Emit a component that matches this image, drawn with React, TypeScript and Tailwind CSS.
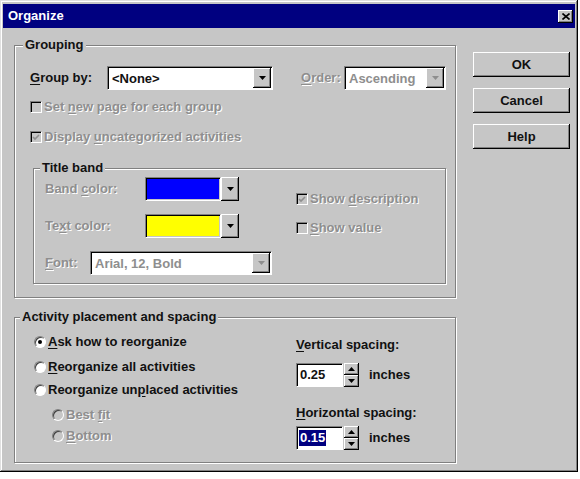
import type { ReactNode } from 'react';

// Win95 style "Organize" dialog

const raised =
  'shadow-[inset_-1px_-1px_0_#000,inset_1px_1px_0_#fff,inset_-2px_-2px_0_#808080]';
const sunken = 'border border-t-[#808080] border-l-[#808080] border-b-white border-r-white';
const etched = 'border border-[#808080] shadow-[1px_1px_0_#fff,inset_1px_1px_0_#fff]';
const disabled = 'text-[#8e8e8e] [text-shadow:1px_1px_0_#fff]';

function U({ children }: { children: ReactNode }) {
  return <span className="underline underline-offset-2">{children}</span>;
}

function Arrow({ up = false, color = '#000' }: { up?: boolean; color?: string }) {
  return (
    <svg width="7" height="4" viewBox="0 0 7 4">
      <polygon points={up ? '3.5,0 7,4 0,4' : '0,0 7,0 3.5,4'} fill={color} />
    </svg>
  );
}

function DropButton({ dim = false }: { dim?: boolean }) {
  return (
    <div className={`w-[18px] h-full flex items-center justify-center bg-[#c6c6c6] ${raised}`}>
      <Arrow color={dim ? '#8e8e8e' : '#000'} />
    </div>
  );
}

function Combo({ value, width, dim = false }: { value: string; width: string; dim?: boolean }) {
  return (
    <div className={`${width} h-[24px] flex bg-white ${sunken} shadow-[inset_1px_1px_0_#000]`}>
      <div className={`flex-1 flex items-center pl-[4px] pt-[1px] ${dim ? 'text-[#8e8e8e]' : ''}`}>
        {value}
      </div>
      <div className="p-[1px] pl-0 h-full">
        <DropButton dim={dim} />
      </div>
    </div>
  );
}

function ColorPick({ color }: { color: string }) {
  return (
    <div className="flex h-[24px] items-stretch">
      <div className={`w-[76px] ${sunken} shadow-[inset_1px_1px_0_#000] p-[1px]`}>
        <div className="w-full h-full" style={{ backgroundColor: color }} />
      </div>
      <DropButton />
    </div>
  );
}

function Check({ checked, label }: { checked: boolean; label: ReactNode }) {
  return (
    <div className="flex items-center h-[16px]">
      <div className={`w-[12px] h-[12px] ${sunken} shadow-[inset_1px_1px_0_#000] flex items-center justify-center`}>
        {checked && (
          <svg width="8" height="7" viewBox="0 0 8 7">
            <path d="M1 3 L3 5 L7 1" stroke="#8e8e8e" strokeWidth="1.6" fill="none" />
          </svg>
        )}
      </div>
      <span className={`ml-[2px] ${disabled}`}>{label}</span>
    </div>
  );
}

function Radio({ on = false, dim = false, label }: { on?: boolean; dim?: boolean; label: ReactNode }) {
  return (
    <div className="flex items-center h-[16px]">
      <div
        className={`w-[12px] h-[12px] rounded-full border border-t-[#808080] border-l-[#808080] border-b-white border-r-white shadow-[inset_1px_1px_0_#404040] flex items-center justify-center ${
          dim ? 'bg-[#c6c6c6]' : 'bg-white'
        }`}
      >
        {on && <div className="w-[4px] h-[4px] rounded-full bg-black" />}
      </div>
      <span className={`ml-[2px] ${dim ? disabled : ''}`}>{label}</span>
    </div>
  );
}

function Spin({ value, selected = false }: { value: string; selected?: boolean }) {
  return (
    <div className="flex items-center h-[24px]">
      <div className={`w-[47px] h-full bg-white ${sunken} shadow-[inset_1px_1px_0_#000] flex items-center pl-[2px]`}>
        <span className={selected ? 'bg-[#000080] text-white px-[1px]' : 'px-[1px]'}>{value}</span>
      </div>
      <div className="ml-[1px] w-[15px] h-full flex flex-col">
        <div className={`flex-1 flex items-center justify-center bg-[#c6c6c6] ${raised}`}>
          <Arrow up />
        </div>
        <div className={`flex-1 flex items-center justify-center bg-[#c6c6c6] ${raised}`}>
          <Arrow />
        </div>
      </div>
      <span className="ml-[10px]">inches</span>
    </div>
  );
}

function Btn({ children }: { children: ReactNode }) {
  return (
    <button className={`w-[97px] h-[25px] bg-[#c6c6c6] ${raised} flex items-center justify-center`}>
      {children}
    </button>
  );
}

export default function App() {
  return (
    <div className="w-[580px] h-[479px] bg-white font-['Liberation_Sans',Arial,sans-serif] font-bold text-[13px] leading-[16px] text-[#111]">
      <div className="w-[578px] h-[472px] bg-[#c6c6c6] p-[3px] shadow-[inset_-1px_-1px_0_#000,inset_1px_1px_0_#e0e0e0,inset_-2px_-2px_0_#808080,inset_2px_2px_0_#fff]">
        {/* Title bar */}
        <div className="mt-[1px] h-[24px] bg-[#000080] flex items-center justify-between pl-[5px] pr-[2px]">
          <span className="text-white">Organize</span>
          <div className={`w-[15px] h-[13px] bg-[#c6c6c6] ${raised} flex items-center justify-center`}>
            <svg width="8" height="7" viewBox="0 0 8 7">
              <path d="M0.5 0.5 L7.5 6.5 M7.5 0.5 L0.5 6.5" stroke="#000" strokeWidth="1.6" />
            </svg>
          </div>
        </div>

        <div className="flex pl-[11px]">
          {/* Left column */}
          <div className="w-[442px]">
            <fieldset className={`mt-[9px] h-[261px] ${etched}`}>
              <legend className="ml-[8px] px-[2px] bg-[#c6c6c6]">Grouping</legend>
              <div className="pl-[15px]">
                <div className="mt-[13px] flex items-center">
                  <span className="w-[77px]">
                    <U>G</U>roup by:
                  </span>
                  <Combo value="<None>" width="w-[166px]" />
                  <span className={`ml-[28px] w-[43px] ${disabled}`}>
                    <U>O</U>rder:
                  </span>
                  <Combo value="Ascending" width="w-[102px]" dim />
                </div>
                <div className="mt-[9px]">
                  <Check checked={false} label={<>Set <U>n</U>ew page for each group</>} />
                </div>
                <div className="mt-[14px]">
                  <Check checked label={<>Display <U>u</U>ncategorized activities</>} />
                </div>

                <fieldset className={`mt-[15px] ml-[3px] w-[413px] h-[124px] ${etched}`}>
                  <legend className="ml-[6px] px-[2px] bg-[#c6c6c6]">Title band</legend>
                  <div className="flex pl-[11px]">
                    <div className="w-[251px]">
                      <div className="mt-[1px] flex items-center">
                        <span className={`w-[100px] ${disabled}`}>
                          Band <U>c</U>olor:
                        </span>
                        <ColorPick color="#0000ff" />
                      </div>
                      <div className="mt-[13px] flex items-center">
                        <span className={`w-[100px] ${disabled}`}>
                          Te<U>x</U>t color:
                        </span>
                        <ColorPick color="#ffff00" />
                      </div>
                      <div className="mt-[13px] flex items-center">
                        <span className={`w-[45px] ${disabled}`}>
                          <U>F</U>ont:
                        </span>
                        <Combo value="Arial, 12, Bold" width="w-[182px]" dim />
                      </div>
                    </div>
                    <div>
                      <div className="mt-[15px]">
                        <Check checked label={<>Show <U>d</U>escription</>} />
                      </div>
                      <div className="mt-[13px]">
                        <Check checked={false} label={<><U>S</U>how value</>} />
                      </div>
                    </div>
                  </div>
                </fieldset>
              </div>
            </fieldset>

            <fieldset className={`mt-[11px] h-[154px] ${etched}`}>
              <legend className="ml-[5px] px-[2px] bg-[#c6c6c6]">Activity placement and spacing</legend>
              <div className="flex pl-[19px]">
                <div className="w-[262px]">
                  <div className="mt-[9px]">
                    <Radio on label={<><U>A</U>sk how to reorganize</>} />
                  </div>
                  <div className="mt-[9px]">
                    <Radio label={<><U>R</U>eorganize all activities</>} />
                  </div>
                  <div className="mt-[7px]">
                    <Radio label={<>Reorganize un<U>p</U>laced activities</>} />
                  </div>
                  <div className="mt-[9px] ml-[18px]">
                    <Radio dim label={<>Best <U>f</U>it</>} />
                  </div>
                  <div className="mt-[5px] ml-[18px]">
                    <Radio dim label={<><U>B</U>ottom</>} />
                  </div>
                </div>
                <div>
                  <div className="mt-[12px]">
                    <U>V</U>ertical spacing:
                  </div>
                  <div className="mt-[10px]">
                    <Spin value="0.25" />
                  </div>
                  <div className="mt-[18px]">
                    <U>H</U>orizontal spacing:
                  </div>
                  <div className="mt-[5px]">
                    <Spin value="0.15" selected />
                  </div>
                </div>
              </div>
            </fieldset>
          </div>

          {/* Buttons */}
          <div className="ml-[17px] mt-[24px] flex flex-col gap-[11px]">
            <Btn>OK</Btn>
            <Btn>Cancel</Btn>
            <Btn>Help</Btn>
          </div>
        </div>
      </div>
    </div>
  );
}
